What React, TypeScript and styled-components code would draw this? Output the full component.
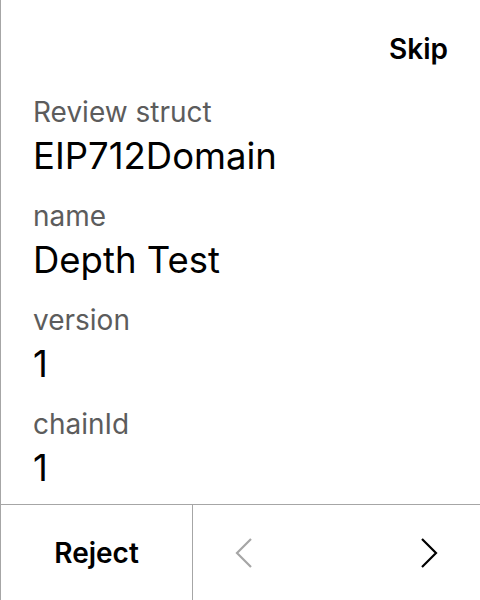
import React from "react";
import styled, { createGlobalStyle } from "styled-components";

const Global = createGlobalStyle`
  html, body { margin: 0; padding: 0; background: #fff; }
  body { font-family: Inter, "Noto Sans", sans-serif; }
`;

const Screen = styled.div`
  width: 480px;
  height: 600px;
  box-sizing: border-box;
  border-left: 1px solid #a6a6a6;
  display: flex;
  flex-direction: column;
  background: #fff;
`;

const TopBar = styled.div`
  height: 94px;
  display: flex;
  justify-content: flex-end;
  align-items: flex-start;
  padding: 31px 32px 0 0;
  box-sizing: border-box;
`;

const SkipButton = styled.button`
  border: none;
  background: none;
  padding: 0;
  font-family: Inter, sans-serif;
  font-weight: 600;
  font-size: 28px;
  line-height: 36px;
  color: #000;
`;

const Content = styled.div`
  flex: 1;
  display: flex;
  flex-direction: column;
  padding: 0 32px;
  gap: 20px;
`;

const Field = styled.div`
  display: flex;
  flex-direction: column;
  gap: 4px;
`;

const Label = styled.div`
  font-size: 28px;
  line-height: 36px;
  color: #5c5c5c;
`;

const Value = styled.div`
  font-size: 36.5px;
  line-height: 44px;
  color: #000;
`;

const Footer = styled.div`
  height: 96px;
  border-top: 1px solid #a6a6a6;
  display: flex;
  box-sizing: border-box;
`;

const RejectCell = styled.div`
  width: 191px;
  border-right: 1px solid #a6a6a6;
  display: flex;
  align-items: center;
  justify-content: center;
  font-size: 28px;
  font-weight: 600;
  color: #000;
`;

const NavCell = styled.div`
  flex: 1;
  display: flex;
  align-items: center;
  justify-content: space-between;
  padding: 0 42px 0 42px;
`;

const Chevron = ({ dir, color }: { dir: "left" | "right"; color: string }) => (
  <svg width="18" height="30" viewBox="0 0 18 30" fill="none">
    <path
      d={dir === "left" ? "M16 1 L2 15 L16 29" : "M2 1 L16 15 L2 29"}
      stroke={color}
      strokeWidth="2.2"
    />
  </svg>
);

const fields = [
  { label: "Review struct", value: "EIP712Domain" },
  { label: "name", value: "Depth Test" },
  { label: "version", value: "1" },
  { label: "chainId", value: "1" },
];

export default function App() {
  return (
    <>
      <Global />
      <Screen>
        <TopBar>
          <SkipButton>Skip</SkipButton>
        </TopBar>
        <Content>
          {fields.map((f) => (
            <Field key={f.label}>
              <Label>{f.label}</Label>
              <Value>{f.value}</Value>
            </Field>
          ))}
        </Content>
        <Footer>
          <RejectCell>Reject</RejectCell>
          <NavCell>
            <Chevron dir="left" color="#a6a6a6" />
            <Chevron dir="right" color="#000" />
          </NavCell>
        </Footer>
      </Screen>
    </>
  );
}
